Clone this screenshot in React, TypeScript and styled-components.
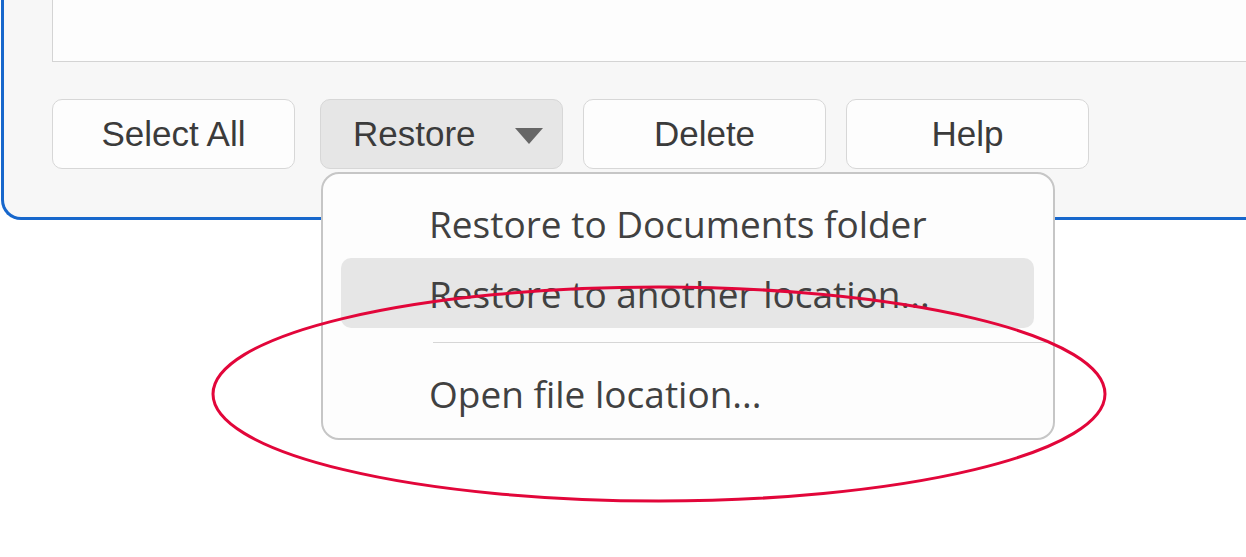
import React from 'react';
import styled, { createGlobalStyle } from 'styled-components';

const GlobalStyle = createGlobalStyle`
  html, body {
    margin: 0;
    padding: 0;
    background: #ffffff;
    overflow: hidden;
  }
  #root {
    width: 1246px;
    height: 557px;
  }
`;

const Page = styled.div`
  position: relative;
  width: 1246px;
  height: 557px;
  overflow: hidden;
`;

const Panel = styled.div`
  margin-left: 1px;
  background: #f7f7f7;
  border-left: 3px solid #1767cc;
  border-bottom: 3px solid #1767cc;
  border-bottom-left-radius: 20px;
  padding: 0 0 48px 48px;
`;

const FileList = styled.div`
  height: 61px;
  background: #fdfdfd;
  border-left: 1px solid #d4d4d4;
  border-bottom: 1px solid #d4d4d4;
`;

const ButtonRow = styled.div`
  display: flex;
  gap: 20px;
  margin-top: 37px;
`;

const Button = styled.button<{ $pressed?: boolean }>`
  box-sizing: border-box;
  width: 243px;
  height: 70px;
  border: 1px solid #d7d7d7;
  border-radius: 10px;
  background: ${({ $pressed }) => ($pressed ? '#e6e6e6' : '#fdfdfd')};
  color: #3b3b3b;
  font-family: 'Liberation Sans', Arial, sans-serif;
  font-size: 35px;
  padding: 0;
  display: flex;
  align-items: center;
  justify-content: center;
`;

const SplitButton = styled(Button)`
  justify-content: space-between;
  padding: 0 19px 0 32px;
`;

const Caret = styled.span`
  width: 0;
  height: 0;
  border-left: 14px solid transparent;
  border-right: 14px solid transparent;
  border-top: 16px solid #666666;
  margin-top: 4px;
`;

const MenuAnchor = styled.div`
  position: relative;
  margin-left: 5px;
`;

const Menu = styled.div`
  position: absolute;
  top: 73px;
  left: 1px;
  box-sizing: border-box;
  width: 734px;
  height: 268px;
  background: #fdfdfd;
  border: 2px solid #c6c6c6;
  border-radius: 18px;
  padding: 14px 19px 0 18px;
  z-index: 2;
`;

const MenuItem = styled.div<{ $hover?: boolean }>`
  height: 70px;
  display: flex;
  align-items: center;
  padding-left: 88px;
  border-radius: 10px;
  background: ${({ $hover }) => ($hover ? '#e6e6e6' : 'transparent')};
  color: #414141;
  font-family: 'Open Sans', 'Noto Sans', sans-serif;
  font-size: 37px;
  white-space: nowrap;
`;

const Separator = styled.div`
  height: 1px;
  background: #d6d6d6;
  margin: 14px -19px 15px 92px;
`;

const Annotation = styled.svg`
  position: absolute;
  top: 0;
  left: 0;
  pointer-events: none;
  z-index: 3;
`;

export default function App() {
  return (
    <Page>
      <GlobalStyle />
      <Panel>
        <FileList />
        <ButtonRow>
          <Button>Select All</Button>
          <MenuAnchor>
            <SplitButton $pressed>
              <span>Restore</span>
              <Caret />
            </SplitButton>
            <Menu>
              <MenuItem>Restore to Documents folder</MenuItem>
              <MenuItem $hover>Restore to another location...</MenuItem>
              <Separator />
              <MenuItem>Open file location...</MenuItem>
            </Menu>
          </MenuAnchor>
          <Button>Delete</Button>
          <Button>Help</Button>
        </ButtonRow>
      </Panel>
      <Annotation width="1246" height="557" viewBox="0 0 1246 557">
        <ellipse cx="659" cy="394" rx="446" ry="107" fill="none" stroke="#e2063a" strokeWidth="3" />
      </Annotation>
    </Page>
  );
}
